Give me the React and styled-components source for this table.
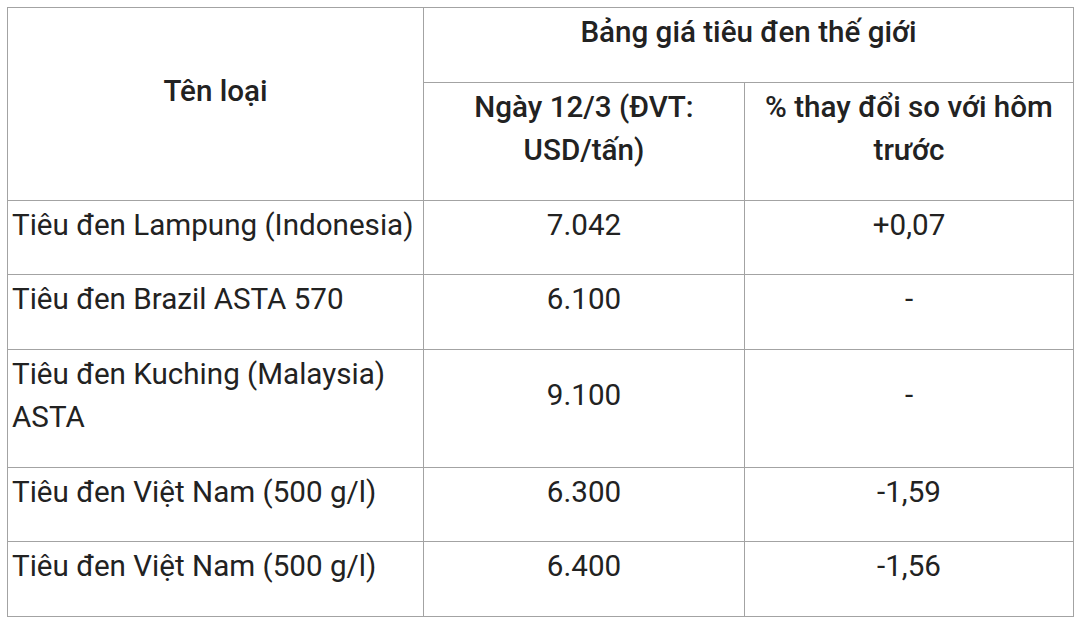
import styled, { createGlobalStyle } from "styled-components"

const GlobalStyle = createGlobalStyle`
  body {
    margin: 0;
    background: #ffffff;
    font-family: Roboto, "Noto Sans", sans-serif;
    color: #222222;
  }
`

const rows = [
  { name: "Tiêu đen Lampung (Indonesia)", price: "7.042", change: "+0,07" },
  { name: "Tiêu đen Brazil ASTA 570", price: "6.100", change: "-" },
  { name: "Tiêu đen Kuching (Malaysia) ASTA", price: "9.100", change: "-" },
  { name: "Tiêu đen Việt Nam (500 g/l)", price: "6.300", change: "-1,59" },
  { name: "Tiêu đen Việt Nam (500 g/l)", price: "6.400", change: "-1,56" },
]

export default function App() {
  return (
    <Wrapper>
      <GlobalStyle />
      <Table>
        <colgroup>
          <col style={{ width: 416 }} />
          <col style={{ width: 321 }} />
          <col style={{ width: 329 }} />
        </colgroup>
        <thead>
          <tr>
            <Th rowSpan={2}><Text>Tên loại</Text></Th>
            <Th colSpan={2}><Text>Bảng giá tiêu đen thế giới</Text></Th>
          </tr>
          <tr>
            <Th><Text>Ngày 12/3 (ĐVT: USD/tấn)</Text></Th>
            <Th><Text>% thay đổi so với hôm trước</Text></Th>
          </tr>
        </thead>
        <tbody>
          {rows.map((row, i) => (
            <tr key={i}>
              <Td><Text>{row.name}</Text></Td>
              <Td $center><Text>{row.price}</Text></Td>
              <Td $center><Text>{row.change}</Text></Td>
            </tr>
          ))}
        </tbody>
      </Table>
    </Wrapper>
  )
}

const Wrapper = styled.div`
  padding: 7px;
`

const Table = styled.table`
  width: 1067px;
  border-collapse: collapse;
  table-layout: fixed;
`

const Th = styled.th`
  border: 1px solid #a3a3a3;
  padding: 3px 4px 4px;
  text-align: center;
  vertical-align: middle;
  font-size: 29.6px;
  font-weight: 500;
  color: #222222;
`

const Td = styled.td`
  border: 1px solid #a3a3a3;
  padding: 3px 4px 4px;
  text-align: ${(p) => (p.$center ? "center" : "left")};
  vertical-align: middle;
  font-size: 29.6px;
  font-weight: 400;
  color: #222222;
`

const Text = styled.p`
  margin: 0 0 23px;
  line-height: 43.5px;
`
